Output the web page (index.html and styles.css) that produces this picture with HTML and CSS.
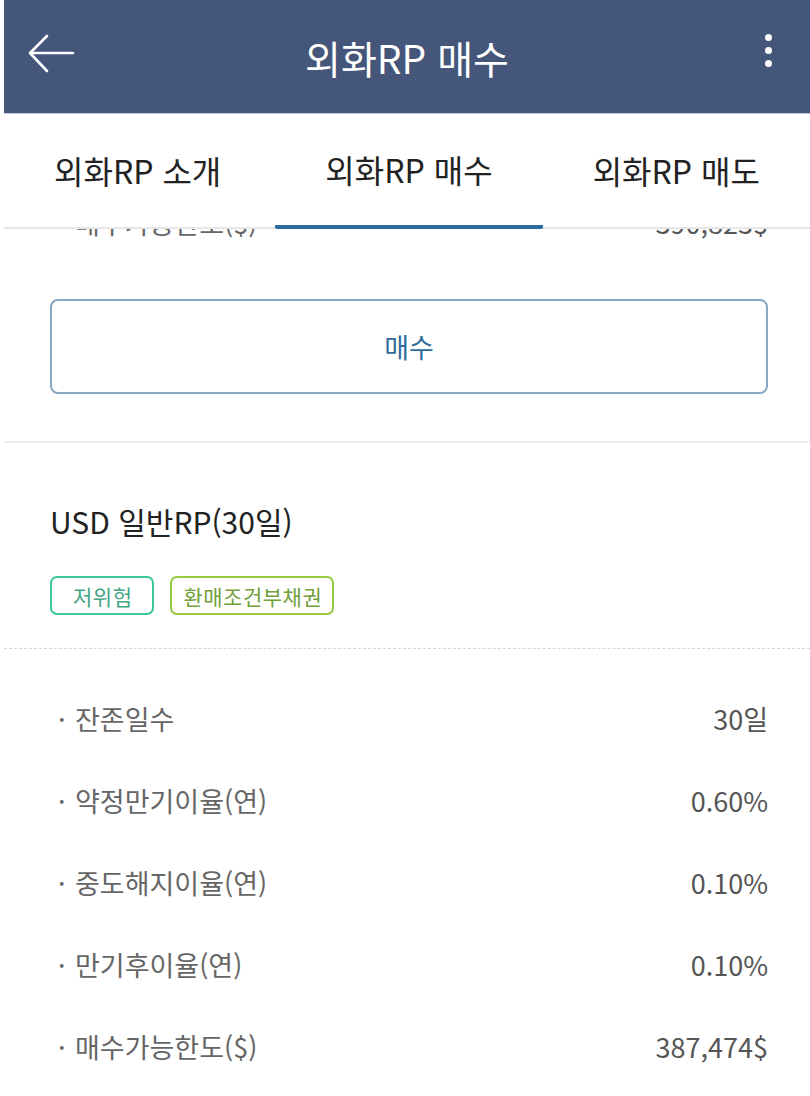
FILE: index.html
```html
<!DOCTYPE html>
<html lang="ko">

<head>
  <meta charset="UTF-8" />
  <meta name="viewport" content="width=device-width, initial-scale=1.0" />
  <title>외화RP 매수</title>
  <link rel="stylesheet" href="styles.css">
</head>

<body>
  <div class="app">
    <div class="header">
      <div class="back">
        <svg width="50" height="44" viewBox="0 0 50 44">
          <path d="M47 21H5 M21 4L4 21L21 39" fill="none" stroke="#fff" stroke-width="2.6" stroke-linecap="round" stroke-linejoin="round" />
        </svg>
      </div>
      <h1>외화RP 매수</h1>
      <div class="more">
        <span></span><span></span><span></span>
      </div>
    </div>

    <div class="tabs">
      <div class="tab">외화RP 소개</div>
      <div class="tab active">외화RP 매수</div>
      <div class="tab">외화RP 매도</div>
    </div>

    <div class="peek">
      <div class="row">
        <div class="label"><span class="dot">·</span>매수가능한도($)</div>
        <div class="value">390,823$</div>
      </div>
    </div>

    <div class="btn-row">
      <button>매수</button>
    </div>

    <div class="product">
      <div class="name">USD 일반RP(30일)</div>
      <div class="tags">
        <span class="tag risk">저위험</span>
        <span class="tag kind">환매조건부채권</span>
      </div>
    </div>

    <div class="info">
      <div class="row">
        <div class="label"><span class="dot">·</span>잔존일수</div>
        <div class="value">30일</div>
      </div>
      <div class="row">
        <div class="label"><span class="dot">·</span>약정만기이율(연)</div>
        <div class="value">0.60%</div>
      </div>
      <div class="row">
        <div class="label"><span class="dot">·</span>중도해지이율(연)</div>
        <div class="value">0.10%</div>
      </div>
      <div class="row">
        <div class="label"><span class="dot">·</span>만기후이율(연)</div>
        <div class="value">0.10%</div>
      </div>
      <div class="row">
        <div class="label"><span class="dot">·</span>매수가능한도($)</div>
        <div class="value">387,474$</div>
      </div>
    </div>
  </div>
</body>

</html>
```

FILE: styles.css
```css
body {
  margin: 0;
  font-family: "Noto Sans CJK KR", "Noto Sans", sans-serif;
  color: #222;
  background: #fff;
}

.app {
  margin-left: 4px;
  height: 1096px;
  overflow: hidden;
}

.header {
  height: 113px;
  background: #44567a;
  border-bottom: 1px solid #b9c5d8;
  display: grid;
  grid-template-columns: 1fr auto 1fr;
  align-items: center;
  padding: 0 38px;
}

.header h1 {
  margin: 0;
  font-size: 39px;
  font-weight: 400;
  color: #fff;
}

.back {
  width: 50px;
  height: 44px;
  margin: -6px 0 0 -16px;
}

.more {
  justify-self: end;
  width: 8px;
  display: flex;
  flex-direction: column;
  align-items: center;
  gap: 6px;
  margin-top: -12px;
}

.more span {
  width: 7px;
  height: 7px;
  border-radius: 50%;
  background: #fff;
}

.tabs {
  display: flex;
  height: 115px;
  border-bottom: 2px solid #e6e6e6;
  box-sizing: border-box;
}

.tab {
  flex: 1;
  display: flex;
  align-items: center;
  justify-content: center;
  font-size: 32px;
  color: #222;
  padding-bottom: 2px;
}

.tab.active {
  border-bottom: 4px solid #2b6c9e;
  border-radius: 2px;
  margin-bottom: -2px;
  margin-left: 4px;
}

.peek {
  height: 13px;
  overflow: hidden;
  display: flex;
  flex-direction: column;
  justify-content: flex-end;
}

.row {
  display: flex;
  justify-content: space-between;
  align-items: center;
  height: 82px;
  padding: 0 42px 0 54px;
  font-size: 27px;
}

.peek .row {
  flex-shrink: 0;
  height: 40px;
}

.label {
  color: #666;
}

.dot {
  display: inline-block;
  width: 17px;
}

.value {
  color: #555;
}

.btn-row {
  padding: 57px 42px 47px 46px;
  border-bottom: 2px solid #eeeeee;
}

.btn-row button {
  width: 100%;
  height: 95px;
  background: #fff;
  border: 2px solid #86a8c6;
  border-radius: 8px;
  font-family: inherit;
  font-size: 27px;
  color: #2f6b9b;
}

.product {
  padding: 58px 46px 33px;
  border-bottom: 1px dashed #d8d8d8;
}

.name {
  font-size: 30px;
  line-height: 40px;
  color: #222;
}

.tags {
  display: flex;
  gap: 16px;
  margin-top: 35px;
}

.tag {
  height: 39px;
  box-sizing: border-box;
  border: 2px solid;
  border-radius: 7px;
  display: flex;
  align-items: center;
  font-size: 21px;
  letter-spacing: 0.5px;
}

.tag.risk {
  border-color: #3cc6a0;
  color: #42a584;
  padding: 0 20px 0 21px;
}

.tag.kind {
  border-color: #96c940;
  color: #72a03a;
  padding: 0 10px 0 11px;
}

.info {
  padding-top: 28px;
}
```
